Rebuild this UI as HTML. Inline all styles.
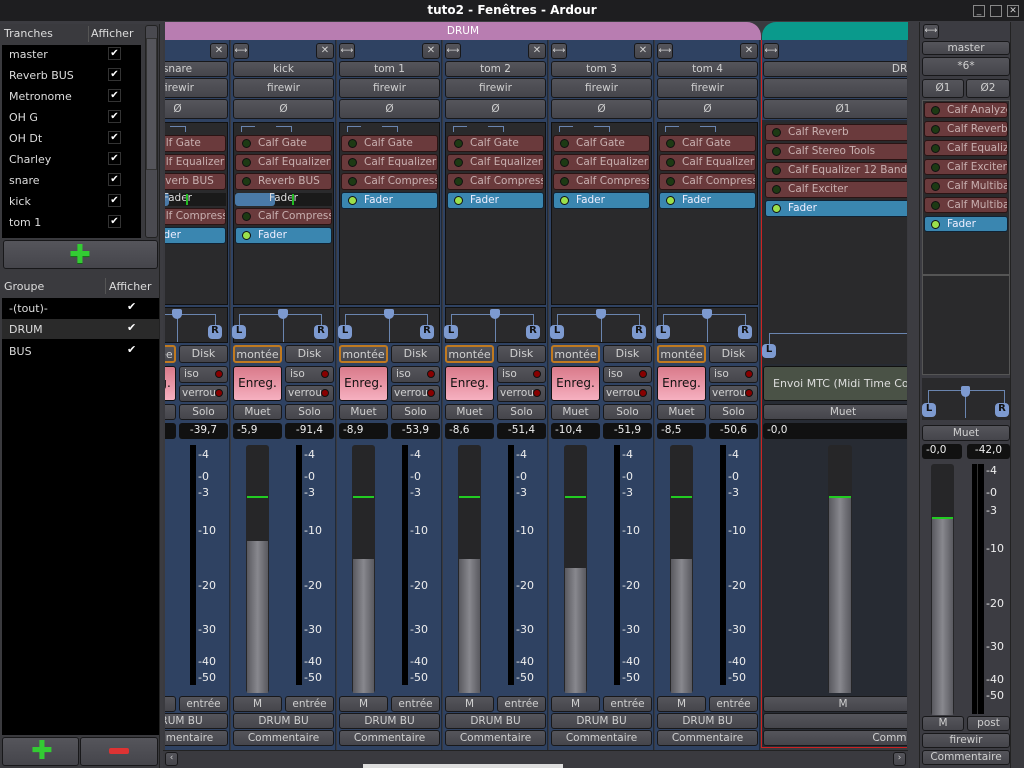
<!DOCTYPE html>
<html><head><meta charset="utf-8">
<style>
*{box-sizing:border-box;margin:0;padding:0}
body{width:1024px;height:768px;overflow:hidden;background:#3c3c41;font-family:"DejaVu Sans","Liberation Sans",sans-serif;font-size:11px;color:#ddd;position:relative}
.a{position:absolute}
.btn{position:absolute;background:linear-gradient(#55555b,#45454b);border:1px solid #18181a;border-radius:3px;color:#d0d0d0;text-align:center;font-size:10.5px;white-space:nowrap;overflow:hidden}
.plug{position:absolute;background:#6a3a3c;border:1px solid #2a1414;border-radius:3px;color:#c8b0b0;font-size:10.5px;white-space:nowrap;overflow:hidden;padding-left:22px;line-height:16px}
.plug:before{content:"";position:absolute;left:6px;top:3px;width:9px;height:9px;border-radius:50%;background:#1d3a14;border:1.5px solid #111;box-sizing:border-box}
.fad{background:#3a86b0;color:#eef;border-color:#123}
.fad:before{background:#9be04c}
.val{position:absolute;background:#111;border-radius:3px;color:#eee;font-size:10.5px;line-height:15px;padding:0 4px}
.sc{position:absolute;font-size:11px;color:#eee}
.lr{position:absolute;width:14px;height:14px;background:#7d9ad0;border-radius:4px;color:#111;font-weight:bold;font-size:10px;line-height:14px;text-align:center}
.tick{position:absolute;width:1px;background:#6a85b0}
.hl{position:absolute;height:1px;background:#6a85b0}
</style></head><body>
<div class="a" style="left:0;top:0;width:1024px;height:21px;background:#1e1e20"></div>
<div class="a" style="left:0;top:3px;width:1024px;text-align:center;font-weight:bold;font-size:12px;color:#fff">tuto2 - Fenêtres - Ardour</div>
<div class="a" style="left:973px;top:5px;width:12px;height:12px;border:1px solid #888;color:#ccc;font-size:9px;line-height:10px;text-align:center">_</div>
<div class="a" style="left:990px;top:5px;width:12px;height:12px;border:1px solid #888"></div>
<div class="a" style="left:1007px;top:5px;width:12px;height:12px;border:1px solid #888;color:#ccc;font-size:9px;line-height:10px;text-align:center">✕</div>

<div class="a" style="left:0;top:24px;width:160px;height:744px;background:#3a3a3e;border-right:1px solid #222"></div>
<div class="a" style="left:4px;top:27px;font-size:11px">Tranches</div>
<div class="a" style="left:88px;top:26px;width:1px;height:16px;background:#555"></div>
<div class="a" style="left:91px;top:27px;font-size:11px">Afficher</div>
<div class="a" style="left:2px;top:45px;width:139px;height:193px;background:#000"></div>
<div class="a" style="left:145px;top:25px;width:13px;height:213px;background:#4a4a50;border:1px solid #222;border-radius:3px"></div>
<div class="a" style="left:146px;top:38px;width:11px;height:132px;background:#55555b;border:1px solid #333"></div>
<div id="tr"></div>
<div class="btn" style="left:3px;top:240px;width:155px;height:29px"></div>
<div class="a" style="left:69px;top:244px;color:#3c3;font-size:26px;font-weight:bold;line-height:22px;text-shadow:0 1px #161">✚</div>
<div class="a" style="left:4px;top:280px;font-size:11px">Groupe</div>
<div class="a" style="left:105px;top:278px;width:1px;height:16px;background:#555"></div>
<div class="a" style="left:109px;top:280px;font-size:11px">Afficher</div>
<div class="a" style="left:2px;top:298px;width:157px;height:437px;background:#000"></div>
<div class="a" style="left:2px;top:319px;width:157px;height:20px;background:#2a2a2a"></div>
<div class="a" style="left:9px;top:302px">-(tout)-</div><div class="a" style="left:127px;top:300px;color:#fff">✔</div>
<div class="a" style="left:9px;top:323px">DRUM</div><div class="a" style="left:127px;top:321px;color:#fff">✔</div>
<div class="a" style="left:9px;top:345px">BUS</div><div class="a" style="left:127px;top:343px;color:#fff">✔</div>
<div class="btn" style="left:2px;top:737px;width:77px;height:29px"></div>
<div class="btn" style="left:80px;top:737px;width:78px;height:29px"></div>
<div class="a" style="left:31px;top:740px;color:#3c3;font-size:26px;font-weight:bold;line-height:22px">✚</div>
<div class="a" style="left:109px;top:748px;width:20px;height:6px;background:#d33;border-radius:2px"></div>

<div class="a" style="left:163px;top:22px;width:745px;height:728px;background:#3a3a3f"></div>
<div class="a" style="left:165px;top:22px;width:596px;height:18px;background:#b87db1;border-top-right-radius:14px;text-align:center;color:#fff;line-height:18px;font-size:10.5px">DRUM</div>
<div class="a" style="left:762px;top:22px;width:146px;height:18px;background:#0a9a8c;border-top-left-radius:14px"></div>
<div id="strips" class="a" style="left:165px;top:40px;width:742px;height:710px;overflow:hidden"></div>

<div class="a" style="left:163px;top:750px;width:745px;height:18px;background:#3a3a3f;border-top:1px solid #222"></div>
<div class="btn" style="left:165px;top:752px;width:13px;height:14px;font-size:9px">‹</div>
<div class="a" style="left:363px;top:764px;width:200px;height:4px;background:#ddd"></div>
<div class="btn" style="left:893px;top:752px;width:13px;height:14px;font-size:9px">›</div>

<div class="a" style="left:919px;top:22px;width:92px;height:746px;background:#3c3c42;border-left:1px solid #222;border-right:1px solid #222"></div>
<div id="master"></div>
<div class="a" style="left:1011px;top:22px;width:13px;height:746px;background:#3a3a3e"></div>

<script>
var names=["master","Reverb BUS","Metronome","OH G","OH Dt","Charley","snare","kick","tom 1"],t="";
names.forEach(function(n,i){var y=48+i*21;t+='<div class="a" style="left:9px;top:'+y+'px">'+n+'</div><div class="a" style="left:108px;top:'+(y-1)+'px;width:13px;height:13px;border:1px solid #333;color:#fff;font-size:10px;line-height:12px;text-align:center">✔</div>';});
document.getElementById('tr').innerHTML=t;

var scale=[["4",456],["0",478],["3",494],["10",532],["20",587],["30",631],["40",663],["50",679]];
function strip(x,name,v1,v2,fill,plugs){
 var o=-40,s='<div class="a" style="left:'+x+'px;top:0;width:105px;height:710px;background:#2f4262;border-right:1px solid #1f2a3a"></div>';
 function A(l,t,w,hh,c,txt,st){return '<div class="'+c+'" style="left:'+(x+l)+'px;top:'+(t+o)+'px;width:'+w+'px;height:'+hh+'px;line-height:'+(hh-2)+'px;'+(st||'')+'">'+(txt||'')+'</div>';}
 s+=A(2,43,16,16,'btn','⟷','font-size:9px');
 s+=A(85,43,18,16,'btn','✕','font-size:10px');
 s+=A(2,61,101,16,'btn',name);
 s+=A(2,78,101,20,'btn','firewir');
 s+=A(2,99,101,20,'btn','Ø');
 s+=A(2,122,101,183,'a','','background:#2a2a2c;border:1px solid #111');
 s+=A(10,126,1,6,'tick','');
 s+=A(10,126,14,1,'hl','');
 s+=A(60,126,1,6,'tick','');
 s+=A(45,126,15,1,'hl','');
 var y=135;
 plugs.forEach(function(p){
  if(p=="FS"){s+=A(4,y+1,97,13,'a','','background:#1a1a1a');s+=A(4,y+1,40,13,'a','','background:#4a7aa8;border-radius:3px');s+=A(4,y,97,15,'a','Fader','text-align:center;color:#ddd;font-size:10.5px');s+=A(61,y+2,2,11,'a','','background:#2b2');y+=16;return;}
  s+=A(4,y,97,17,'plug'+(p=="Fader"?' fad':''),p);y+=19;});
 s+=A(2,307,101,36,'a','','background:#2a2a2c;border:1px solid #111');
 s+=A(8,314,44,1,'hl','');s+=A(52,314,38,1,'hl','');
 s+=A(8,314,1,12,'tick','');s+=A(90,314,1,12,'tick','');s+=A(52,314,1,28,'tick','');
 s+=A(47,309,10,10,'a','','background:#7d9ad0;border-radius:2px 2px 5px 5px');
 s+=A(1,325,14,14,'lr','L');s+=A(83,325,14,14,'lr','R');
 s+=A(2,345,49,18,'btn','montée','border:2px solid #c07a20;font-size:11px');
 s+=A(54,345,49,18,'btn','Disk','font-size:11px');
 s+=A(2,366,49,35,'a','Enreg.','background:linear-gradient(#d97a8a,#f6b0c0);border:1px solid #111;border-radius:3px;color:#111;text-align:center;font-size:12px');
 s+=A(54,366,49,17,'btn','iso','text-align:left;padding-left:4px');
 s+=A(54,385,49,17,'btn','verrou','text-align:left;padding-left:2px');
 s+=A(90,370,8,8,'a','','background:#800;border-radius:50%;border:1px solid #111');
 s+=A(90,389,8,8,'a','','background:#800;border-radius:50%;border:1px solid #111');
 s+=A(2,404,49,16,'btn','Muet');s+=A(54,404,49,16,'btn','Solo');
 s+=A(2,423,49,16,'val',v1,'');s+=A(54,423,49,16,'val',v2,'text-align:center');
 s+=A(15,445,23,248,'a','','background:#262628;border-radius:3px');
 s+=A(16,fill,21,693-fill,'a','','background:linear-gradient(90deg,#59595f,#88888e,#59595f)');
 s+=A(16,496,21,2,'a','','background:#2c2');
 s+=A(65,445,6,240,'a','','background:#000');
 scale.forEach(function(c){s+=A(73,c[1]-7,30,14,'sc','-'+c[0]);});
 s+=A(2,696,49,16,'btn','M');s+=A(54,696,49,16,'btn','entrée');
 s+=A(2,713,101,16,'btn','DRUM BU');s+=A(2,730,101,16,'btn','Commentaire');
 return s;
}
var S="",base=-165;
var p3=["Calf Gate","Calf Equalizer 5","Calf Compress","Fader"];
S+=strip(125+base,"snare","","-39,7",0,["Calf Gate","Calf Equalizer 5","Reverb BUS","FS","Calf Compress","Fader"]);
S+=strip(231+base,"kick","-5,9","-91,4",541,["Calf Gate","Calf Equalizer 5","Reverb BUS","FS","Calf Compress","Fader"]);
S+=strip(337+base,"tom 1","-8,9","-53,9",559,p3);
S+=strip(443+base,"tom 2","-8,6","-51,4",559,p3);
S+=strip(549+base,"tom 3","-10,4","-51,9",568,p3);
S+=strip(655+base,"tom 4","-8,5","-50,6",559,p3);
var bx=761+base,o=-40;
function B(l,t,w,hh,c,txt,st){return '<div class="'+c+'" style="left:'+(bx+l)+'px;top:'+(t+o)+'px;width:'+w+'px;height:'+hh+'px;line-height:'+(hh-2)+'px;'+(st||'')+'">'+(txt||'')+'</div>';}
S+=B(0,40,200,708,'a','','background:#272b33;border:1px solid #c22');
S+=B(1,40,198,80,'a','','background:#2f4262');
S+=B(2,43,16,16,'btn','⟷','font-size:9px');
S+=B(2,61,290,16,'btn','DRUM');
S+=B(2,78,290,20,'btn','');
S+=B(2,99,160,20,'btn','Ø1');
S+=B(1,122,198,200,'a','','background:#2a2a2c');
["Calf Reverb","Calf Stereo Tools","Calf Equalizer 12 Band","Calf Exciter","Fader"].forEach(function(p,i){S+=B(4,124+i*19,190,17,'plug'+(p=="Fader"?' fad':''),p);});
S+=B(1,322,198,42,'a','','background:#2a2a2c');
S+=B(8,333,190,1,'hl','');S+=B(8,333,1,12,'tick','');
S+=B(1,344,14,14,'lr','L');
S+=B(2,366,190,35,'a','Envoi MTC (Midi Time Code)','background:#4a5246;border:1px solid #111;border-radius:3px;color:#ddd;padding-left:9px;font-size:11px');
S+=B(2,404,160,16,'btn','Muet');
S+=B(2,423,190,16,'val','-0,0');
S+=B(67,445,24,248,'a','','background:#262628;border-radius:3px');
S+=B(68,498,22,195,'a','','background:linear-gradient(90deg,#59595f,#88888e,#59595f)');
S+=B(68,496,22,2,'a','','background:#2c2');
S+=B(2,696,160,16,'btn','M');S+=B(2,713,190,16,'btn','');S+=B(2,730,290,16,'btn','Commentaire');
document.getElementById('strips').innerHTML=S;

var m="",mx=920;
function M(l,t,w,hh,c,txt,st){return '<div class="'+c+'" style="left:'+(mx+l)+'px;top:'+t+'px;width:'+w+'px;height:'+hh+'px;line-height:'+(hh-2)+'px;'+(st||'')+'">'+(txt||'')+'</div>';}
m+=M(3,24,16,15,'btn','⟷','font-size:9px');
m+=M(2,41,88,14,'btn','master');
m+=M(2,57,88,19,'btn','*6*');
m+=M(2,79,42,19,'btn','Ø1');m+=M(46,79,44,19,'btn','Ø2');
m+=M(2,100,88,175,'a','','background:#2a2a2c;border:1px solid #555');
["Calf Analyzer","Calf Reverb","Calf Equalizer","Calf Exciter","Calf Multiband","Calf Multiband","Fader"].forEach(function(p,i){m+=M(4,102+i*19,84,16,'plug'+(p=="Fader"?' fad':''),p);});
m+=M(2,275,88,100,'a','','background:#2a2a2c;border:1px solid #555');
m+=M(2,378,88,42,'a','','background:#2a2a2c');
m+=M(8,390,76,1,'hl','');m+=M(8,390,1,14,'tick','');m+=M(84,390,1,14,'tick','');m+=M(45,390,1,28,'tick','');
m+=M(41,386,9,11,'a','','background:#7d9ad0;border-radius:2px 2px 5px 5px');
m+=M(2,403,14,14,'lr','L');m+=M(75,403,14,14,'lr','R');
m+=M(2,425,88,16,'btn','Muet');
m+=M(2,444,40,15,'val','-0,0');m+=M(47,444,43,15,'val','-42,0','text-align:center');
m+=M(11,464,23,251,'a','','background:#262628;border-radius:3px');
m+=M(12,518,21,197,'a','','background:linear-gradient(90deg,#59595f,#88888e,#59595f)');
m+=M(12,517,21,2,'a','','background:#2c2');
m+=M(52,464,12,250,'a','','background:#000');m+=M(57,464,1,250,'a','','background:#333');
[["4",472],["0",494],["3",512],["10",550],["20",605],["30",648],["40",681],["50",697]].forEach(function(c){m+=M(66,c[1]-7,26,14,'sc','-'+c[0]);});
m+=M(2,716,42,15,'btn','M');m+=M(47,716,43,15,'btn','post');
m+=M(2,733,88,15,'btn','firewir');m+=M(2,750,88,15,'btn','Commentaire');
document.getElementById('master').innerHTML=m;
</script>
</body></html>
